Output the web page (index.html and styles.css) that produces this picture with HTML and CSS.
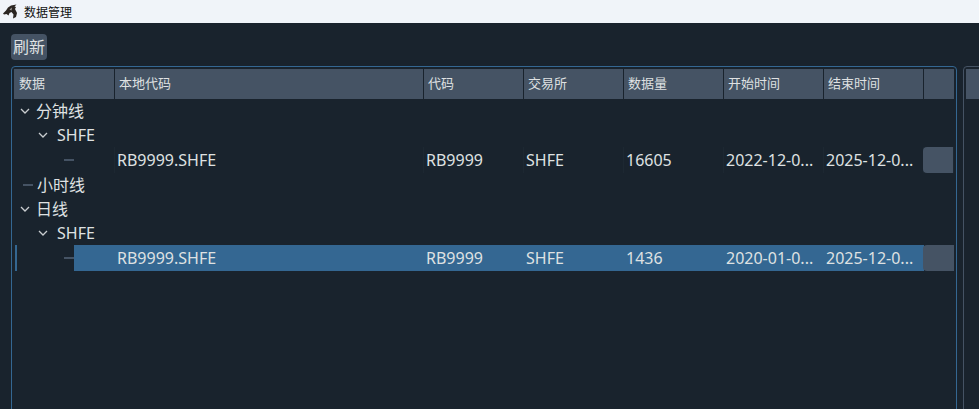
FILE: index.html
```html
<!DOCTYPE html>
<html lang="en">
  <head>
    <meta charset="UTF-8" />
    <meta name="viewport" content="width=device-width, initial-scale=1.0" />
    <title>数据管理</title>
    <link rel="stylesheet" href="styles.css">
  </head>
  <body>
    <div class="titlebar">
      <svg class="logo" width="16" height="15" viewBox="0 0 16 15">
        <path d="M1 9.5 L4 6.5 L6 3.5 L9 1.5 L14.5 0.5 L12.5 2.5 L14 3 L13 5 L15 9 L14 13 L11 14.5 L11.5 10.5 L9.5 8 L7.5 9 L6.5 11.5 L4.5 10 L2 10.5 Z" fill="#2b2622" />
        <path d="M7.5 5.5 L10 3.5 L9.5 6.5 Z" fill="#a09c98" />
      </svg>
      <span>数据管理</span>
    </div>

    <div class="content">
      <button class="refresh">刷新</button>

      <div class="panels">
        <div class="panel">
          <div class="row header">
            <div class="cell">数据</div>
            <div class="cell">本地代码</div>
            <div class="cell">代码</div>
            <div class="cell">交易所</div>
            <div class="cell">数据量</div>
            <div class="cell">开始时间</div>
            <div class="cell">结束时间</div>
            <div class="cell"></div>
          </div>

          <div class="row">
            <div class="cell tree level-0">
              <svg class="arrow" width="10" height="6" viewBox="0 0 10 6"><path d="M1 1 L5 5 L9 1" /></svg>
              <span>分钟线</span>
            </div>
          </div>
          <div class="row">
            <div class="cell tree level-1">
              <svg class="arrow" width="10" height="6" viewBox="0 0 10 6"><path d="M1 1 L5 5 L9 1" /></svg>
              <span>SHFE</span>
            </div>
          </div>
          <div class="row leaf">
            <div class="cell tree level-2"><i class="dash"></i></div>
            <div class="cell">RB9999.SHFE</div>
            <div class="cell">RB9999</div>
            <div class="cell">SHFE</div>
            <div class="cell">16605</div>
            <div class="cell">2022-12-0...</div>
            <div class="cell">2025-12-0...</div>
            <div class="cell action"><button class="row-btn"></button></div>
          </div>
          <div class="row">
            <div class="cell tree level-0">
              <i class="dash short"></i>
              <span>小时线</span>
            </div>
          </div>
          <div class="row">
            <div class="cell tree level-0">
              <svg class="arrow" width="10" height="6" viewBox="0 0 10 6"><path d="M1 1 L5 5 L9 1" /></svg>
              <span>日线</span>
            </div>
          </div>
          <div class="row">
            <div class="cell tree level-1">
              <svg class="arrow" width="10" height="6" viewBox="0 0 10 6"><path d="M1 1 L5 5 L9 1" /></svg>
              <span>SHFE</span>
            </div>
          </div>
          <div class="row leaf selected">
            <div class="cell tree level-2"><i class="dash"></i><i class="sel-fill"></i></div>
            <div class="cell">RB9999.SHFE</div>
            <div class="cell">RB9999</div>
            <div class="cell">SHFE</div>
            <div class="cell">1436</div>
            <div class="cell">2020-01-0...</div>
            <div class="cell">2025-12-0...</div>
            <div class="cell action"><button class="row-btn"></button></div>
          </div>
        </div>

        <div class="panel side">
          <div class="side-head"></div>
        </div>
      </div>
    </div>
  </body>
</html>
```

FILE: styles.css
```css
* {
  box-sizing: border-box;
}
html,
body {
  height: 100%;
}
body {
  margin: 0;
  overflow: hidden;
  background-color: #19232d;
  color: #dfe1e2;
  font-family: "Noto Sans", "Noto Sans CJK SC", sans-serif;
  display: flex;
  flex-direction: column;
}
.titlebar {
  height: 23px;
  flex: none;
  background-color: #f0f4f9;
  color: #111;
  font-size: 12px;
  display: flex;
  align-items: center;
  gap: 3px;
  padding-left: 2px;
}
.titlebar span {
  margin-left: 3px;
}
.content {
  flex: 1;
  min-height: 0;
  padding: 11px 0 0 11px;
  display: flex;
  flex-direction: column;
  gap: 6px;
}
.refresh {
  width: 36px;
  height: 26px;
  padding: 0;
  border: none;
  border-radius: 4px;
  background-color: #455364;
  color: #dfe1e2;
  font-family: inherit;
  font-size: 16px;
  line-height: 26px;
}
.panels {
  flex: 1;
  min-height: 0;
  display: flex;
  gap: 6px;
  margin-bottom: -6px;
}
.panel {
  width: 946px;
  flex: none;
  border: 1px solid #346792;
  border-radius: 4px;
  padding: 2px;
}
.panel.side {
  width: 40px;
  border-color: #455364;
}
.side-head {
  height: 30px;
  background-color: #455364;
}
.row {
  display: grid;
  grid-template-columns: 101px 309px 100px 100px 100px 100px 100px 30px;
  height: 24px;
  font-size: 16px;
  align-items: stretch;
}
.row.leaf {
  height: 26px;
}
.cell {
  display: flex;
  align-items: center;
  padding-left: 2px;
  white-space: nowrap;
  min-width: 0;
  position: relative;
}
.leaf .cell {
  border-right: 1px solid #1d2832;
}
.header {
  height: 30px;
  background-color: #455364;
  font-size: 13px;
}
.header .cell {
  border-right: 1px solid #19232d;
  padding-left: 4px;
  padding-bottom: 4px;
}
.header .cell:first-child {
  padding-left: 5px;
}
.header .cell:last-child {
  border-right: none;
}
.tree {
  font-size: 16px;
  grid-column: 1 / 3;
}
.tree span {
  position: relative;
  top: -1px;
}
.leaf .tree {
  grid-column: auto;
}
.level-0 {
  padding-left: 6px;
}
.level-0 span {
  margin-left: 6px;
}
.level-1 {
  padding-left: 24px;
}
.level-1 span {
  margin-left: 9px;
  top: 0;
}
.arrow {
  fill: none;
  stroke: #c9cdd0;
  stroke-width: 1.3;
}
.dash {
  display: block;
  width: 10px;
  height: 2px;
  background-color: #455364;
  margin-left: 48px;
}
.dash.short {
  margin-left: 3px;
}
.level-0 .dash.short + span {
  margin-left: 4px;
}
.selected .cell {
  background-color: #346792;
  border-right: none;
}
.selected .tree {
  background: none;
}
.selected::before {
  content: "";
  position: absolute;
  left: 15px;
  width: 2px;
  height: 26px;
  background-color: #346792;
}
.sel-fill {
  position: absolute;
  left: 60px;
  right: 0;
  top: 0;
  bottom: 0;
  background-color: #346792;
}
.action {
  padding: 0;
  margin-left: -1px;
}
.selected .action {
  background: none;
}
.row-btn {
  width: 31px;
  height: 26px;
  padding: 0;
  border: none;
  border-radius: 4px 0 0 4px;
  background-color: #455364;
}
```
